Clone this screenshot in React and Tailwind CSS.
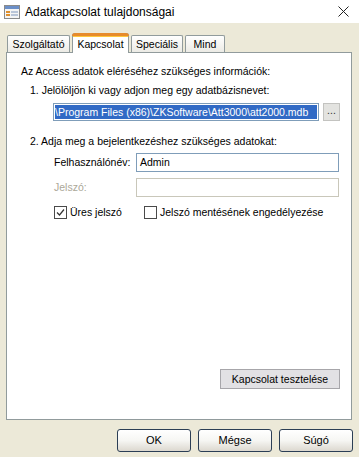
import React from 'react'

const Tab = ({ label, width, active }) => {
  if (active) {
    return (
      <div
        className={`relative -mb-px flex h-[20px] items-center justify-center rounded-t-[3px] border border-b-0 border-[#919b9c] bg-white ${width}`}
      >
        <div className="absolute -left-px -right-px -top-px h-[3px] rounded-t-[3px] bg-[#e68b2c]"></div>
        <div className="absolute left-0 right-0 top-[2px] h-px bg-[#ffc73c]"></div>
        <span className="mt-[2px]">{label}</span>
      </div>
    )
  }
  return (
    <div
      className={`flex h-[17px] items-center justify-center rounded-t-[2px] border border-b-0 border-[#919b9c] bg-gradient-to-b from-white to-[#ecebe5] ${width}`}
    >
      {label}
    </div>
  )
}

const Checkbox = ({ checked, label }) => (
  <div className="flex items-center">
    <div className="flex h-[13px] w-[13px] items-center justify-center border border-[#4a4a4a] bg-white">
      {checked && (
        <svg width="9" height="9" viewBox="0 0 9 9">
          <path d="M1 4.5 L3.5 7 L8 1.5" fill="none" stroke="#333" strokeWidth="1.2" />
        </svg>
      )}
    </div>
    <span className="ml-[3px]">{label}</span>
  </div>
)

const DlgButton = ({ label }) => (
  <button className="flex h-[23px] w-[74px] items-center justify-center rounded-[3px] border border-[#2b3e55] bg-gradient-to-b from-white via-[#f6f6f3] to-[#dcd8cf] text-[11px] text-black">
    {label}
  </button>
)

export default function App() {
  return (
    <div className="flex h-[457px] w-[359px] flex-col bg-[#ece9d8] font-['Liberation_Sans',Arial,sans-serif] text-[10.5px] leading-[13px] text-black">
      {/* title bar */}
      <div className="flex h-[23px] items-center bg-white pl-[4px] pr-[10px]">
        <svg width="17" height="14" viewBox="0 0 17 14">
          <rect x="0.5" y="0.5" width="15" height="13" fill="#f4f4f4" stroke="#8a8a8a" />
          <rect x="1" y="1" width="14" height="3" fill="#6b8fc8" />
          <rect x="2" y="6" width="4" height="2" fill="#e0902c" />
          <rect x="7" y="6" width="7" height="2" fill="#b9c5d8" />
          <rect x="2" y="9" width="4" height="2" fill="#e0902c" />
          <rect x="7" y="9" width="7" height="2" fill="#b9c5d8" />
        </svg>
        <span className="ml-[4px] text-[12px] leading-[16px]">Adatkapcsolat tulajdonságai</span>
        <svg className="ml-auto" width="11" height="11" viewBox="0 0 11 11">
          <path d="M0.5 0.5 L10.5 10.5 M10.5 0.5 L0.5 10.5" stroke="#222" strokeWidth="1" />
        </svg>
      </div>

      {/* tabs */}
      <div className="mt-[10px] flex items-end gap-[2px] pl-[7px]">
        <Tab label="Szolgáltató" width="w-[63px]" />
        <Tab label="Kapcsolat" width="w-[57px]" active />
        <Tab label="Speciális" width="w-[52px]" />
        <Tab label="Mind" width="w-[40px]" />
      </div>

      {/* panel */}
      <div className="ml-[6px] flex h-[368px] w-[346px] flex-col border border-[#919b9c] bg-white pl-[14px]">
        <div className="mt-[12px]">Az Access adatok eléréséhez szükséges információk:</div>
        <div className="mt-[6px] pl-[9px]">1. Jelölöljön ki vagy adjon meg egy adatbázisnevet:</div>
        <div className="mt-[6px] flex pl-[32px]">
          <div className="flex h-[18px] w-[266px] items-center border border-[#7f9db9] p-[1px]">
            <div className="flex h-full w-full items-center overflow-hidden whitespace-nowrap bg-[#316ac5] text-white">
              \Program Files (x86)\ZKSoftware\Att3000\att2000.mdb
            </div>
          </div>
          <div className="ml-[4px] flex h-[18px] w-[17px] items-center justify-center border border-[#c3c3c0] bg-[#e3e3e0] pb-[3px] text-[#333]">
            ...
          </div>
        </div>
        <div className="mt-[14px] pl-[9px]">2. Adja meg a bejelentkezéshez szükséges adatokat:</div>
        <div className="mt-[5px] flex items-center pl-[33px]">
          <span className="w-[82px]">Felhasználónév:</span>
          <div className="flex h-[19px] w-[203px] items-center border border-[#7f9db9] pl-[3px]">Admin</div>
        </div>
        <div className="mt-[6px] flex items-center pl-[33px]">
          <span className="w-[82px] text-[#aca899]">Jelszó:</span>
          <div className="h-[19px] w-[203px] border border-[#c9c7ba]"></div>
        </div>
        <div className="mt-[9px] flex items-center pl-[33px]">
          <div className="w-[90px]">
            <Checkbox checked label="Üres jelszó" />
          </div>
          <Checkbox label="Jelszó mentésének engedélyezése" />
        </div>
        <div className="flex-1"></div>
        <div className="mb-[30px] flex justify-end pr-[11px]">
          <button className="flex h-[20px] w-[120px] items-center justify-center border border-[#a7a6aa] bg-[#e2e1e4]">
            Kapcsolat tesztelése
          </button>
        </div>
      </div>

      {/* dialog buttons */}
      <div className="mt-[9px] flex justify-end gap-[7px] pr-[6px]">
        <DlgButton label="OK" />
        <DlgButton label="Mégse" />
        <DlgButton label="Súgó" />
      </div>
    </div>
  )
}
